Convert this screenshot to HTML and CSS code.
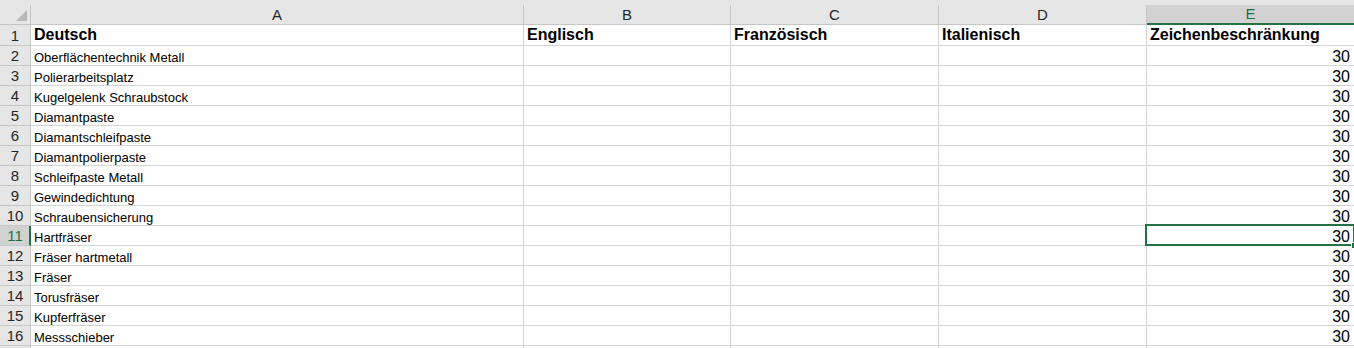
FILE: index.html
```html
<!doctype html>

<html lang="de">
<head>
    <meta charset="utf-8">
    <title>Mappe1</title>
    <link rel="stylesheet" href="styles.css">
</head>

<body>
    <div class="sheet">

        <div class="row head-row">
            <div class="corner"><span class="corner-mark"></span></div>
            <div class="col-head">A</div>
            <div class="col-head">B</div>
            <div class="col-head">C</div>
            <div class="col-head">D</div>
            <div class="col-head is-active">E</div>
        </div>

        <div class="row first-row">
            <div class="row-head">1</div>
            <div class="cell bold">Deutsch</div>
            <div class="cell bold">Englisch</div>
            <div class="cell bold">Französisch</div>
            <div class="cell bold">Italienisch</div>
            <div class="cell bold">Zeichenbeschränkung</div>
        </div>

        <div class="row">
            <div class="row-head">2</div>
            <div class="cell">Oberflächentechnik Metall</div>
            <div class="cell"></div>
            <div class="cell"></div>
            <div class="cell"></div>
            <div class="cell num">30</div>
        </div>
        <div class="row">
            <div class="row-head">3</div>
            <div class="cell">Polierarbeitsplatz</div>
            <div class="cell"></div>
            <div class="cell"></div>
            <div class="cell"></div>
            <div class="cell num">30</div>
        </div>
        <div class="row">
            <div class="row-head">4</div>
            <div class="cell">Kugelgelenk Schraubstock</div>
            <div class="cell"></div>
            <div class="cell"></div>
            <div class="cell"></div>
            <div class="cell num">30</div>
        </div>
        <div class="row">
            <div class="row-head">5</div>
            <div class="cell">Diamantpaste</div>
            <div class="cell"></div>
            <div class="cell"></div>
            <div class="cell"></div>
            <div class="cell num">30</div>
        </div>
        <div class="row">
            <div class="row-head">6</div>
            <div class="cell">Diamantschleifpaste</div>
            <div class="cell"></div>
            <div class="cell"></div>
            <div class="cell"></div>
            <div class="cell num">30</div>
        </div>
        <div class="row">
            <div class="row-head">7</div>
            <div class="cell">Diamantpolierpaste</div>
            <div class="cell"></div>
            <div class="cell"></div>
            <div class="cell"></div>
            <div class="cell num">30</div>
        </div>
        <div class="row">
            <div class="row-head">8</div>
            <div class="cell">Schleifpaste Metall</div>
            <div class="cell"></div>
            <div class="cell"></div>
            <div class="cell"></div>
            <div class="cell num">30</div>
        </div>
        <div class="row">
            <div class="row-head">9</div>
            <div class="cell">Gewindedichtung</div>
            <div class="cell"></div>
            <div class="cell"></div>
            <div class="cell"></div>
            <div class="cell num">30</div>
        </div>
        <div class="row">
            <div class="row-head">10</div>
            <div class="cell">Schraubensicherung</div>
            <div class="cell"></div>
            <div class="cell"></div>
            <div class="cell"></div>
            <div class="cell num">30</div>
        </div>
        <div class="row">
            <div class="row-head is-active">11</div>
            <div class="cell">Hartfräser</div>
            <div class="cell"></div>
            <div class="cell"></div>
            <div class="cell"></div>
            <div class="cell num is-selected">30<span class="fill-handle"></span></div>
        </div>
        <div class="row">
            <div class="row-head">12</div>
            <div class="cell">Fräser hartmetall</div>
            <div class="cell"></div>
            <div class="cell"></div>
            <div class="cell"></div>
            <div class="cell num">30</div>
        </div>
        <div class="row">
            <div class="row-head">13</div>
            <div class="cell">Fräser</div>
            <div class="cell"></div>
            <div class="cell"></div>
            <div class="cell"></div>
            <div class="cell num">30</div>
        </div>
        <div class="row">
            <div class="row-head">14</div>
            <div class="cell">Torusfräser</div>
            <div class="cell"></div>
            <div class="cell"></div>
            <div class="cell"></div>
            <div class="cell num">30</div>
        </div>
        <div class="row">
            <div class="row-head">15</div>
            <div class="cell">Kupferfräser</div>
            <div class="cell"></div>
            <div class="cell"></div>
            <div class="cell"></div>
            <div class="cell num">30</div>
        </div>
        <div class="row">
            <div class="row-head">16</div>
            <div class="cell">Messschieber</div>
            <div class="cell"></div>
            <div class="cell"></div>
            <div class="cell"></div>
            <div class="cell num">30</div>
        </div>
        <!-- row 17 is only a sliver at the bottom edge -->
        <div class="row">
            <div class="row-head"></div>
            <div class="cell"></div>
            <div class="cell"></div>
            <div class="cell"></div>
            <div class="cell"></div>
            <div class="cell"></div>
        </div>

    </div>
</body>
</html>
```

FILE: styles.css
```css
body {
    margin: 0;
    overflow: hidden;
    background-color: #ffffff;
    font-family: "Liberation Sans", Arial, sans-serif;
    color: #000000;
}

.sheet {
    width: 1355px;
}

.row {
    display: grid;
    grid-template-columns: 31px 493px 207px 208px 208px 208px;
    height: 20px;
}

.first-row {
    height: 21px;
}

.head-row {
    height: 25px;
    padding-top: 5px;
    box-sizing: border-box;
    background-color: #e6e6e6;
}

.corner, .col-head, .row-head, .cell {
    box-sizing: border-box;
    border-right: 1px solid #d4d4d4;
    border-bottom: 1px solid #d4d4d4;
}

.corner {
    position: relative;
    border-color: #c6c6c6;
}

.corner-mark {
    position: absolute;
    right: 3px;
    bottom: 3px;
    width: 0;
    height: 0;
    border-left: 11px solid transparent;
    border-bottom: 11px solid #b7b7b7;
}

.col-head {
    border-right-color: #c6c6c6;
    border-bottom-color: #c6c6c6;
    font-size: 15px;
    line-height: 19px;
    text-align: center;
    color: #262626;
}

.col-head.is-active {
    background-color: #d2d2d2;
    color: #217346;
    border-bottom: 2px solid #217346;
    line-height: 18px;
}

.row-head {
    background-color: #e6e6e6;
    border-right-color: #c6c6c6;
    border-bottom-color: #c6c6c6;
    font-size: 15px;
    text-align: center;
    color: #262626;
    display: flex;
    align-items: flex-end;
    justify-content: center;
    line-height: 17px;
    padding-bottom: 1px;
}

.row-head.is-active {
    background-color: #d2d2d2;
    color: #217346;
    border-right: 2px solid #217346;
    padding-left: 1px;
}

.cell {
    font-size: 13px;
    line-height: 15px;
    padding: 0 3px 0 3px;
    white-space: nowrap;
    overflow: visible;
    display: flex;
    align-items: flex-end;
}

.bold {
    font-size: 16px;
    font-weight: bold;
    line-height: 18px;
    padding-bottom: 1px;
}

.num {
    font-size: 16px;
    justify-content: flex-end;
    line-height: 17px;
    padding-right: 4px;
    padding-bottom: 0;
}

.is-selected {
    position: relative;
}

.is-selected::after {
    content: "";
    position: absolute;
    left: -2px;
    top: -2px;
    right: -1px;
    bottom: -1px;
    border: 2px solid #217346;
}

.fill-handle {
    position: absolute;
    right: -4px;
    bottom: -4px;
    width: 5px;
    height: 5px;
    background-color: #217346;
    border: 1px solid #ffffff;
    z-index: 1;
}
```
